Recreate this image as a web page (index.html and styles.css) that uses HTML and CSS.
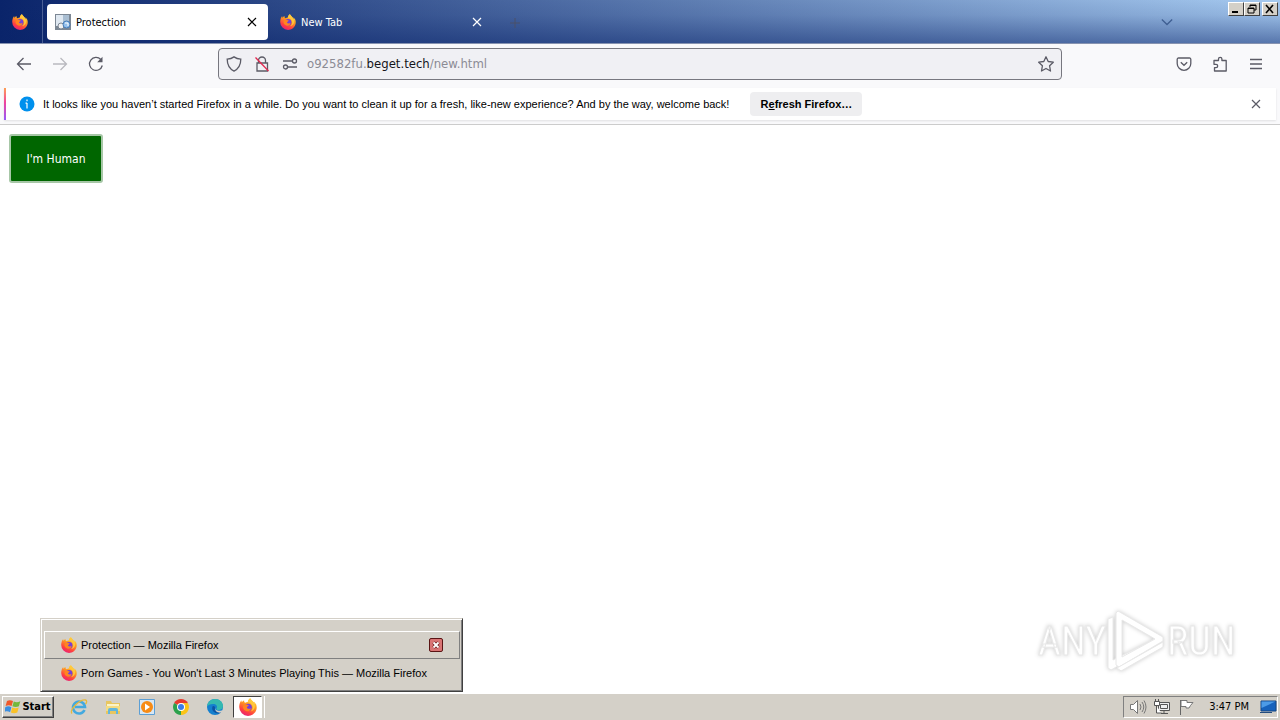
FILE: index.html
```html
<!DOCTYPE html>
<html lang="en">
<head>
<meta charset="utf-8">
<title>Protection</title>
<link rel="stylesheet" href="styles.css">
</head>
<body>
<svg class="defs" aria-hidden="true">
  <defs>
    <linearGradient id="flame" x1="0.8" y1="0" x2="0.3" y2="1">
      <stop offset="0" stop-color="#ffe14a"/><stop offset="0.4" stop-color="#ff9a20"/><stop offset="0.75" stop-color="#ff4040"/><stop offset="1" stop-color="#e6207a"/>
    </linearGradient>
    <symbol id="firefox" viewBox="0 0 16 16">
      <path fill="url(#flame)" d="M15.2 5.6c-.4-1-1.300-1.900-2-2.200.4.700.6 1.400.7 2C12.900 3 11 2.200 9.900.2c-1.600 1-2 2.500-2.100 3.400-.8 0-1.600.3-2.200.7C4.400 3.900 4.500 2.500 4.600 2 3.600 2.500 2.900 3.200 2.500 3.700c-.3-.4-.3-1.500-.2-1.800C1 3.100.2 5.300.2 8.100A7.800 7.800 0 0 0 8 15.900c3.700 0 6.900-2.600 7.600-6.200.3-1.400.1-2.900-.4-4.100z"/>
      <circle cx="8.200" cy="8.300" r="3.200" fill="#7540d8"/>
      <path fill="#ff8520" d="M3.500 7.500c.6-1.500 2-2.200 3.300-1.700.5.400 1.300.5 2 .6-.2.900-1.600 1-1.900 2.100.8 1.500 2.600 1.300 3.600.3-.1 2.200-1.900 3.300-3.700 2.900C4.700 11.200 3.300 9.500 3.500 7.500z"/>
      <path fill="#ffc83c" d="M9.900.2C8.400 1.300 8 2.700 7.900 3.700c2.300.2 4.300 2.200 4.300 4.500 0 1.600-.8 3-2 3.800 3-.6 4.600-3.600 3.700-6.600C12.900 3 11 2.200 9.900.2z"/>
    </symbol>
    <symbol id="cross" viewBox="0 0 10 10"><path d="M1 1l8 8M9 1L1 9" fill="none" stroke="currentColor" stroke-width="1.200"/></symbol>
  </defs>
</svg>

<header class="tabbar">
  <button class="view" aria-label="Firefox View"><svg class="ico"><use href="#firefox"/></svg></button>
  <div class="tab active">
    <svg class="ico" viewBox="0 0 16 16"><path fill="#7c8794" d="M0 0h16v16H0z"/><path fill="#dfe8f1" d="M1 1h13v11H1z"/><path fill="#a9bed2" d="M8 1h6v7H8z"/><circle cx="6" cy="12" r="3" fill="#f1f1f1" stroke="#7c8794"/><circle cx="11.500" cy="10.500" r="3.500" fill="#94c0ec" stroke="#447bb8"/><path d="M10 9h3v3" stroke="#fff" fill="none"/></svg>
    <span class="title">Protection</span>
    <button class="close" aria-label="Close tab"><svg><use href="#cross"/></svg></button>
  </div>
  <div class="tab">
    <svg class="ico"><use href="#firefox"/></svg>
    <span class="title">New Tab</span>
    <button class="close" aria-label="Close tab"><svg><use href="#cross"/></svg></button>
  </div>
  <button class="newtab" aria-label="Open a new tab"><svg viewBox="0 0 10 10"><path d="M5 0v10M0 5h10" stroke="currentColor" fill="none"/></svg></button>
  <button class="alltabs" aria-label="List all tabs"><svg viewBox="0 0 14 8"><path d="M1 1l6 6 6-6" stroke="currentColor" stroke-width="1.500" fill="none"/></svg></button>
  <div class="winctl">
    <button aria-label="Minimize"><svg viewBox="0 0 12 10"><path d="M2 7h6v2H2z"/></svg></button>
    <button aria-label="Restore"><svg viewBox="0 0 12 10"><path d="M4 1h6v5H8M4 1v2M4 1.500h6M2 4h6v5H2zM2 4.500h6" fill="none" stroke="#000"/></svg></button>
    <button class="x" aria-label="Close"><svg viewBox="0 0 12 10"><path d="M2 1l7 8M9 1L2 9" fill="none" stroke="#000" stroke-width="1.600"/></svg></button>
  </div>
</header>

<nav class="toolbar">
  <div class="side">
    <button aria-label="Back"><svg viewBox="0 0 16 16"><path d="M15 8H1.500M7.500 2L1.500 8l6 6"/></svg></button>
    <button class="dim" aria-label="Forward" disabled><svg viewBox="0 0 16 16"><path d="M1 8h13.500M8.500 2l6 6-6 6"/></svg></button>
    <button aria-label="Reload"><svg viewBox="0 0 16 16"><path d="M14.300 9.500A6.500 6.500 0 1 1 12.800 3.500"/><path d="M14.500.8v5.400H9.200z" fill="#5b5b66" stroke="none"/></svg></button>
  </div>
  <div class="urlbar">
    <svg viewBox="0 0 16 16"><path d="M8 .9C6.200 2.200 3.700 3 1.200 3.100c0 5.200 1.500 9.500 6.800 12 5.300-2.500 6.800-6.800 6.800-12C12.300 3 9.800 2.200 8 .9z"/></svg>
    <svg viewBox="0 0 16 16"><path d="M4.500 7V4.500a3.500 3.500 0 0 1 7 0V7M3 7h10.500v8H3z"/><path d="M1.500 1.500l13 13.500" stroke="#e22850"/></svg>
    <svg viewBox="0 0 16 16"><path d="M1 5h9M6 11h9"/><circle cx="12.500" cy="5" r="2"/><circle cx="3.500" cy="11" r="2"/></svg>
    <a class="url" href="#">o92582fu.<b>beget.tech</b>/new.html</a>
    <button aria-label="Bookmark this page"><svg viewBox="0 0 16 16"><path stroke-linejoin="round" d="M8 .8l2.200 4.700 5.100.7-3.700 3.600.9 5.200L8 12.500 3.500 15l.9-5.200L.7 6.200l5.100-.7z"/></svg></button>
  </div>
  <div class="side right">
    <button aria-label="Save to Pocket"><svg viewBox="0 0 16 16"><path d="M2.500 2h11a1.300 1.300 0 0 1 1.300 1.300V7.500a6.800 6.800 0 0 1-13.600 0V3.300A1.300 1.300 0 0 1 2.500 2z"/><path d="M4.800 6.300L8 9.300l3.200-3"/></svg></button>
    <button aria-label="Extensions"><svg viewBox="0 0 16 16"><path stroke-linejoin="round" d="M2 4.500h4.500V3a1.700 1.700 0 0 1 3.400 0v1.500h4.300V15H2.500v-3.300H4a1.700 1.700 0 0 0 0-3.400H2z"/></svg></button>
    <button aria-label="Open application menu"><svg viewBox="0 0 16 16"><path d="M2 3.500h12M2 8h12M2 12.500h12"/></svg></button>
  </div>
</nav>

<div class="noticewrap">
  <div class="notice">
    <svg class="info" viewBox="0 0 16 16"><circle cx="8" cy="8" r="7.500" fill="#0090ed"/><path d="M8 3.500v1.700M8 7v5.500M6.500 7.200H8" stroke="#fff" stroke-width="1.200" fill="none"/></svg>
    <span>It looks like you haven’t started Firefox in a while. Do you want to clean it up for a fresh, like-new experience? And by the way, welcome back!</span>
    <button class="refresh">R<u>e</u>fresh Firefox…</button>
    <button class="dismiss" aria-label="Dismiss"><svg><use href="#cross"/></svg></button>
  </div>
</div>

<main class="page">
  <button class="human">I'm Human</button>
  <svg class="mark" viewBox="0 0 204 70" role="img" aria-label="ANY RUN">
    <g class="marktext"><text x="3" y="49">ANY</text><text x="132" y="49">RUN</text></g>
    <g fill="#fff" stroke="#e8e8e8" stroke-linejoin="round">
      <path d="M73 13l5-2v43l48-24 2 4-52 30-3-2z"/>
      <path fill-rule="evenodd" d="M83 5l45 26v4L84 61l-3-2V7zM87 14v37l33-18z"/>
      <path d="M82 62l46-26v5L86 65z"/>
    </g>
  </svg>
  <div class="windows">
    <div class="win current"><svg class="ico"><use href="#firefox"/></svg><span>Protection — Mozilla Firefox</span>
      <button aria-label="Close window"><svg viewBox="0 0 14 14"><rect x=".5" y=".5" width="13" height="13" rx="1.500" fill="#d97474" stroke="#5a1414"/><path d="M4.500 4.500l5 5M9.500 4.500l-5 5" stroke="#702020" stroke-width="3.400"/><path d="M4.500 4.500l5 5M9.500 4.500l-5 5" stroke="#fff" stroke-width="1.800"/></svg></button></div>
    <div class="win"><svg class="ico"><use href="#firefox"/></svg><span>Porn Games - You Won't Last 3 Minutes Playing This — Mozilla Firefox</span></div>
  </div>
</main>

<footer class="taskbar">
  <button class="start"><svg viewBox="0 0 16 16"><path d="M2 2c2-1.300 4-1 6 0L6.600 7C4.700 6 3 5.900.6 7z" fill="#f0582a"/><path d="M8.800 2.400c2 1 4.200 1 6.500-.2L13.900 7.300c-2.300 1-4.200 1-6.500 0z" fill="#74b83c"/><path d="M.4 8c2.300-1 4.200-.8 6 .2l-1.300 5C3.200 12.200 1.300 12-1 13z" fill="#3b8ee0"/><path d="M7.200 8.600c2.300 1 4.200 1 6.500 0l-1.400 5c-2.300 1-4.300 1-6.400 0z" fill="#fac228"/></svg>Start</button>
  <div class="quick">
    <button aria-label="Internet Explorer"><svg viewBox="0 0 18 18"><path d="M14.500 12a6 6 0 1 1 .5-3H5" fill="none" stroke="#43a9df" stroke-width="2.600"/><path d="M2 15.500C-1 12 10 1 15.500 2c2 .5 1 3 0 4.200" fill="none" stroke="#e6b93c" stroke-width="1.300"/></svg></button>
    <button aria-label="File Explorer"><svg viewBox="0 0 18 18"><path d="M2 3h5l1 2h8v11H2z" fill="#e8c660"/><path d="M3 6h12v4H3z" fill="#fbf3c8"/><path d="M2 8h14v5H2z" fill="#f4dc82"/><path d="M4 16v-4q0-2 2-2h6q2 0 2 2v4h-2v-3H6v3z" fill="#62b6dd"/></svg></button>
    <button aria-label="Media Player"><svg viewBox="0 0 18 18"><path d="M1.500 1.500h15v15h-15z" fill="#d8e7f4" stroke="#5c9fd5"/><circle cx="9" cy="9" r="6" fill="#f78b16"/><path d="M7 5.500l5 3.500-5 3.500z" fill="#fff"/></svg></button>
    <button aria-label="Chrome"><svg viewBox="0 0 18 18"><path d="M9 9L2.100 5a8 8 0 0 1 13.800 0z" fill="#e63b2e"/><path d="M9 9l6.900-4A8 8 0 0 1 9 17z" fill="#fbc416"/><path d="M9 9v8A8 8 0 0 1 2.100 5z" fill="#2ca14c"/><path d="M9 5h6.900L9 9z" fill="#fbc416"/><circle cx="9" cy="9" r="4" fill="#fff"/><circle cx="9" cy="9" r="3" fill="#3b7de8"/></svg></button>
    <button aria-label="Edge"><svg viewBox="0 0 18 18"><circle cx="9" cy="9" r="8" fill="#1580cf"/><path d="M1 8.500C1.500 4 5 1 9 1c5 0 8 3.500 8 7 0 2.500-2 4-4.500 4-1.500 0-2.500-.6-2-1.500 1.500-2.500-.5-4.500-3.500-4.500S2 7 1 8.500z" fill="#35b9b0"/><path d="M6.500 8.500c-1.500 4 2 7 6 7 1.500-.4 3-1.500 3.600-3-4 2-8 .5-7-3 0-.8-1.500-2-2.600-1z" fill="#0c55a5"/><path d="M9.500 9.500c-1 3 3 4 6.800 2.700L17 14l-2 .6c-3 .5-7-1.400-5.500-5.100z" fill="#d4d0c8"/></svg></button>
    <button class="on" aria-label="Firefox"><svg class="ico"><use href="#firefox"/></svg></button>
  </div>
  <div class="tray">
    <svg viewBox="0 0 18 18"><path d="M1.500 6.500h3l4-4v13l-4-4h-3z" fill="#fff" stroke="#777"/><path d="M11 6q2 3 0 6M13 4q3.500 5 0 10M15 2.500q4 6.500 0 13" fill="none" stroke="#777"/></svg>
    <svg viewBox="0 0 18 18"><path d="M5.500 4.500h11v8h-11zM7.500 6.500h7v4h-7zM8 15.500h7M11 12.500v3" fill="#eee" stroke="#555"/><path d="M1.500 3.500h5v4h-5zM2.500 1v2M5.500 1v2M3.500 8v7h5" fill="#fff" stroke="#555"/></svg>
    <svg viewBox="0 0 18 18"><path d="M3.500 2v15" stroke="#666" fill="none"/><path d="M4 2.500h6v2h6l-2.500 3L12 10H9V8.500H4z" fill="#fff" stroke="#777"/></svg>
    <time>3:47 PM</time>
    <svg viewBox="0 0 18 18"><path d="M2 3h15v10H2z" fill="#1762bc" stroke="#164783"/><path d="M2.500 3.500h14L2.500 10z" fill="#4d9be7"/><path d="M1 14.500h12" stroke="#234c7e"/></svg>
  </div>
</footer>
</body>
</html>
```
FILE: styles.css
```css
* { box-sizing: border-box; }
body {
  margin: 0;
  height: 100vh;
  display: flex;
  flex-direction: column;
  background: #fff;
  color: #000;
  font: 11px/16px "Liberation Sans", Arial, sans-serif;
  white-space: nowrap;
}
button {
  display: flex;
  align-items: center;
  justify-content: center;
  margin: 0;
  padding: 0;
  border: 0;
  background: none;
  color: inherit;
  font: inherit;
}
svg { display: block; flex: none; }
.defs { position: absolute; width: 0; height: 0; }
.ico { width: 16px; height: 16px; }

.tabbar {
  display: flex;
  height: 44px;
  flex: none;
  color: #fff;
  background: linear-gradient(rgba(255, 255, 255, 0), rgba(10, 36, 106, 0.1) 35%, rgba(10, 36, 106, 0.5)), linear-gradient(90deg, #0a246a, #a6caf0);
  border-bottom: 1px solid #8793b0;
}
.view { width: 43px; padding-right: 2px; border-right: 1px solid #4a5f95; margin-right: 4px; }
.tab {
  display: flex;
  align-items: center;
  width: 221px;
  height: 36px;
  margin: 4px 4px 0 0;
  padding: 0 8px;
  gap: 5px;
  border-radius: 4px;
}
.active { background: #fff; color: #000; }
.title { flex: 1; padding-top: 2px; }
.title, .human, .url, .start, .tray { font-family: Tahoma, "DejaVu Sans Condensed", "Liberation Sans", sans-serif; }
.close { width: 16px; height: 16px; }
.close svg { width: 10px; height: 10px; }
.newtab { width: 36px; padding-top: 2px; color: #4a5068; }
.newtab svg { width: 10px; height: 10px; }
.alltabs { margin-left: auto; width: 36px; color: #3f5f92; }
.alltabs svg { width: 12px; height: 8px; }
.winctl { display: flex; margin: 2px 2px 0 43px; }
.winctl button {
  width: 16px;
  height: 14px;
  background: #d4d0c8;
  border: 1px solid;
  border-color: #fff #404040 #404040 #fff;
}
.winctl svg { width: 12px; height: 10px; }
.winctl .x { margin-left: 2px; }

.toolbar {
  display: flex;
  align-items: center;
  height: 44px;
  flex: none;
  padding: 0 8px 4px;
  background: #f9f9fb;
}
.side { display: flex; flex: 1; gap: 4px; }
.right { justify-content: flex-end; }
.side button { width: 32px; height: 32px; }
.toolbar svg { width: 16px; height: 16px; fill: none; stroke: #5b5b66; stroke-width: 1.3; }
.dim { opacity: 0.4; }
.urlbar {
  display: flex;
  align-items: center;
  flex: 0 1 844px;
  height: 32px;
  padding: 0 7px;
  gap: 12px;
  border: 1px solid #77777f;
  border-radius: 4px;
  background: #f0f0f4;
  font-size: 13px;
}
.url { flex: 1; margin-left: -3px; color: #8b8b94; text-decoration: none; }
.url b { font-weight: normal; color: #15141a; }

.noticewrap { flex: none; padding: 0 4px 4px; background: #f9f9fb; border-bottom: 1px solid #ccc; }
.notice {
  display: flex;
  align-items: center;
  height: 32px;
  padding: 0 12px 0 13px;
  border-left: 2px solid;
  border-image: linear-gradient(#ffa64f, #f0449c 45%, #9059ff) 1;
  background: #fff;
  box-shadow: 0 1px 2px rgba(0, 0, 0, 0.1);
}
.info { width: 16px; height: 16px; margin-right: 8px; }
.refresh {
  width: 112px;
  height: 24px;
  margin-left: 21px;
  border-radius: 4px;
  background: #eeeef0;
  font-weight: bold;
}
.dismiss { margin-left: auto; width: 16px; height: 16px; color: #5b5b66; }
.dismiss svg { width: 10px; height: 10px; }

.page { position: relative; flex: 1; padding: 9px; }
.human {
  width: 94px;
  height: 49px;
  border: 2px solid #a7c7a7;
  border-radius: 3px;
  background: #060;
  color: #fff;
  font-size: 12px;
}
.mark { position: absolute; right: 41px; bottom: 17px; width: 204px; height: 70px; filter: drop-shadow(0 0 2px rgba(0, 0, 0, 0.2)); }
.marktext { font: 40px "Liberation Sans Narrow", "Roboto Condensed", "Liberation Sans", sans-serif; fill: #fff; stroke: #e8e8e8; stroke-width: 1; }

.windows {
  position: absolute;
  left: 40px;
  bottom: 1px;
  width: 423px;
  padding: 12px 2px 4px 3px;
  background: #d4d0c8;
  border: 1px solid;
  border-color: #d4d0c8 #404040 #404040 #d4d0c8;
  box-shadow: inset 1px 1px #fff, inset -1px -1px #808080;
}
.win { display: flex; align-items: center; height: 28px; padding: 0 16px; gap: 4px; border: 1px solid transparent; }
.current { border-color: #fff #808080 #808080 #fff; }
.win button { margin-left: auto; }
.win button svg { width: 14px; height: 14px; }

.taskbar {
  display: flex;
  align-items: center;
  height: 27px;
  flex: none;
  padding: 0 2px;
  background: #d4d0c8;
  border-top: 1px solid #fff;
}
.start {
  width: 52px;
  height: 22px;
  gap: 1px;
  border: 1px solid;
  border-color: #fff #404040 #404040 #fff;
  box-shadow: inset -1px -1px #808080;
  font-weight: bold;
}
.start svg { width: 16px; height: 16px; }
.quick { display: flex; margin-left: 8px; }
.quick button { width: 34px; height: 22px; }
.quick button svg { width: 18px; height: 18px; }
.quick .on {
  width: 29px;
  margin-left: 1px;
  border: 1px solid;
  border-color: #404040 #fff #fff #404040;
  background: #fff;
  box-shadow: 2px 0 #d4d0c8, 3px 0 #fff;
}
.tray {
  display: flex;
  align-items: center;
  height: 22px;
  margin-left: auto;
  padding: 0 0 0 5px;
  gap: 6px;
  border: 1px solid;
  border-color: #808080 #fff #fff #808080;
}
.tray svg { width: 18px; height: 18px; }
.tray time { margin: 0 4px 0 8px; }
```
